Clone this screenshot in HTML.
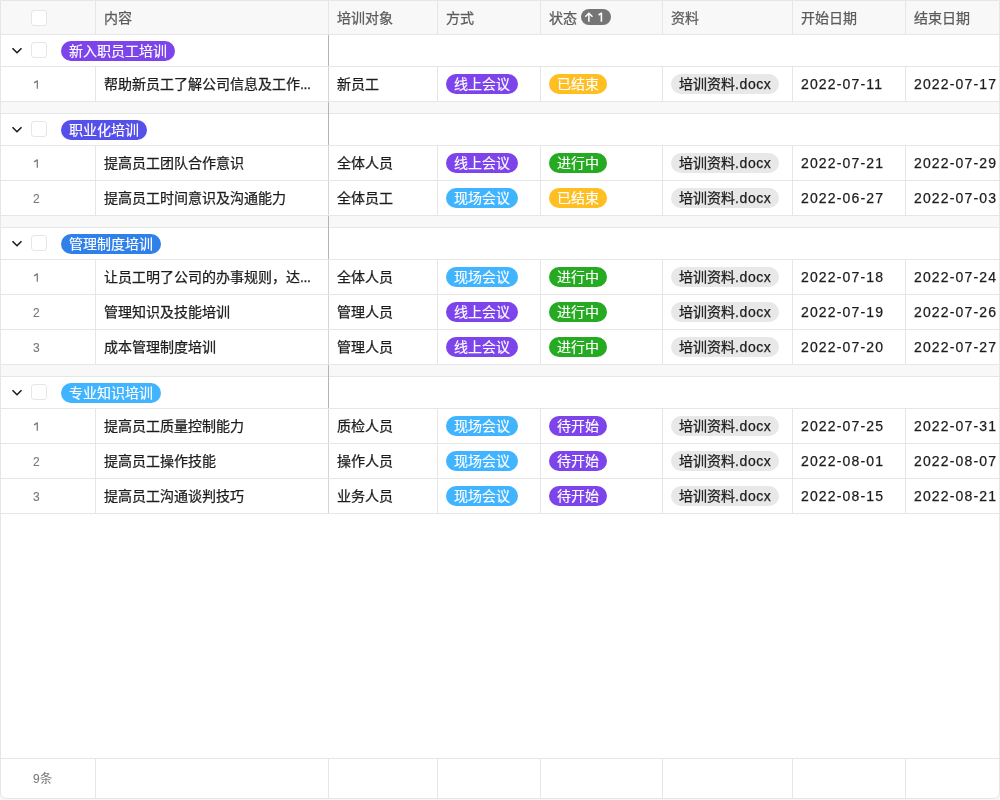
<!DOCTYPE html><html lang="zh-CN"><head><meta charset="utf-8"><style>
*{box-sizing:border-box;margin:0;padding:0}
html,body{width:1000px;height:800px;overflow:hidden;background:#f7f7f7}
body{font-family:"Liberation Sans",sans-serif;font-size:14px;color:#1d1d1d;position:relative}
.root{will-change:transform}
.a{position:absolute}
.hl{position:absolute;height:1px;background:#e6e6e6}
.vl{position:absolute;width:1px;background:#e6e6e6}
.t{position:absolute;white-space:nowrap;line-height:20px;-webkit-text-stroke:0.25px currentColor}
.cb{position:absolute;width:16px;height:16px;border:1px solid #e6e6e6;border-radius:3px;background:#fff}
.tag{position:absolute;height:20px;line-height:20px;border-radius:10px;color:#fff;padding:0 8px;white-space:nowrap;-webkit-text-stroke:0.15px #fff}
.file{position:absolute;height:20px;line-height:20px;border-radius:10px;background:#e8e8e8;color:#1d1d1d;padding:0 8px;white-space:nowrap;-webkit-text-stroke:0.25px #1d1d1d}
</style></head><body>
<div class="a root" style="left:0;top:0;width:1000px;height:799px;border:1px solid #e6e6e6;border-radius:0 0 6px 6px;overflow:hidden;background:#fff">

<div class="a" style="left:0;top:0;width:1000px;height:34px;background:#f8f8f8"></div>
<div class="cb" style="left:30px;top:9px"></div>
<div class="t" style="left:103px;top:7px;color:#5c5c5c">内容</div>
<div class="vl" style="left:94px;top:0;height:34px"></div>
<div class="t" style="left:336px;top:7px;color:#5c5c5c">培训对象</div>
<div class="vl" style="left:327px;top:0;height:34px"></div>
<div class="t" style="left:445px;top:7px;color:#5c5c5c">方式</div>
<div class="vl" style="left:436px;top:0;height:34px"></div>
<div class="t" style="left:548px;top:7px;color:#5c5c5c">状态</div>
<div class="vl" style="left:539px;top:0;height:34px"></div>
<div class="t" style="left:670px;top:7px;color:#5c5c5c">资料</div>
<div class="vl" style="left:661px;top:0;height:34px"></div>
<div class="t" style="left:800px;top:7px;color:#5c5c5c">开始日期</div>
<div class="vl" style="left:791px;top:0;height:34px"></div>
<div class="t" style="left:913px;top:7px;color:#5c5c5c">结束日期</div>
<div class="vl" style="left:904px;top:0;height:34px"></div>
<div class="a" style="left:580px;top:8px;width:30px;height:16px;border-radius:8px;background:#757575"><svg class="a" style="left:0;top:0" width="30" height="16" viewBox="0 0 30 16"><path d="M7.9 12.8 V5 M4.3 7.8 L7.9 4.3 L11.5 7.8" fill="none" stroke="#fff" stroke-width="1.5"/><path d="M17.6 6 L20.4 4.2 V12.8" fill="none" stroke="#fff" stroke-width="1.6" stroke-linejoin="round"/></svg></div>
<div class="hl" style="left:0;top:33px;width:1000px"></div>
<svg class="a" style="left:9px;top:43px" width="14" height="12" viewBox="0 0 14 12"><path d="M2.5 4.2 L7 8.7 L11.5 4.2" fill="none" stroke="#1d1d1d" stroke-width="1.6"/></svg>
<div class="cb" style="left:30px;top:41px"></div>
<div class="tag" style="left:60px;top:40px;background:#7c44ea">新入职员工培训</div>
<div class="vl" style="left:327px;top:34px;height:32px;background:#b4b4b4"></div>
<div class="hl" style="left:0;top:65px;width:1000px"></div>
<svg class="a" style="left:32px;top:79px" width="8" height="11" viewBox="0 0 8 11"><path d="M1.1 2.9 L4.3 0.9 V8.7" fill="none" stroke="#7a7a7a" stroke-width="1.25" stroke-linejoin="round"/></svg>
<div class="t" style="left:103px;top:73px">帮助新员工了解公司信息及工作<span style="letter-spacing:-0.35px">...</span></div>
<div class="t" style="left:336px;top:73px">新员工</div>
<div class="tag" style="left:445px;top:73px;background:#7c44ea">线上会议</div>
<div class="tag" style="left:548px;top:73px;background:#ffbe22">已结束</div>
<div class="file" style="left:670px;top:73px">培训资料<span style="letter-spacing:0.6px">.docx</span></div>
<div class="t" style="left:800px;top:73px;letter-spacing:1.15px">2022-07-11</div>
<div class="t" style="left:913px;top:73px;letter-spacing:1.15px">2022-07-17</div>
<div class="vl" style="left:94px;top:66px;height:35px"></div>
<div class="vl" style="left:327px;top:66px;height:35px;background:#d4d4d4"></div>
<div class="vl" style="left:436px;top:66px;height:35px"></div>
<div class="vl" style="left:539px;top:66px;height:35px"></div>
<div class="vl" style="left:661px;top:66px;height:35px"></div>
<div class="vl" style="left:791px;top:66px;height:35px"></div>
<div class="vl" style="left:904px;top:66px;height:35px"></div>
<div class="hl" style="left:0;top:100px;width:1000px"></div>
<div class="a" style="left:0;top:101px;width:1000px;height:12px;background:#f8f8f8"></div>
<div class="hl" style="left:0;top:112px;width:1000px"></div>
<div class="vl" style="left:327px;top:101px;height:12px;background:#b4b4b4"></div>
<svg class="a" style="left:9px;top:122px" width="14" height="12" viewBox="0 0 14 12"><path d="M2.5 4.2 L7 8.7 L11.5 4.2" fill="none" stroke="#1d1d1d" stroke-width="1.6"/></svg>
<div class="cb" style="left:30px;top:120px"></div>
<div class="tag" style="left:60px;top:119px;background:#5550ea">职业化培训</div>
<div class="vl" style="left:327px;top:113px;height:32px;background:#b4b4b4"></div>
<div class="hl" style="left:0;top:144px;width:1000px"></div>
<svg class="a" style="left:32px;top:158px" width="8" height="11" viewBox="0 0 8 11"><path d="M1.1 2.9 L4.3 0.9 V8.7" fill="none" stroke="#7a7a7a" stroke-width="1.25" stroke-linejoin="round"/></svg>
<div class="t" style="left:103px;top:152px">提高员工团队合作意识</div>
<div class="t" style="left:336px;top:152px">全体人员</div>
<div class="tag" style="left:445px;top:152px;background:#7c44ea">线上会议</div>
<div class="tag" style="left:548px;top:152px;background:#25aa22">进行中</div>
<div class="file" style="left:670px;top:152px">培训资料<span style="letter-spacing:0.6px">.docx</span></div>
<div class="t" style="left:800px;top:152px;letter-spacing:1.15px">2022-07-21</div>
<div class="t" style="left:913px;top:152px;letter-spacing:1.15px">2022-07-29</div>
<div class="vl" style="left:94px;top:145px;height:35px"></div>
<div class="vl" style="left:327px;top:145px;height:35px;background:#d4d4d4"></div>
<div class="vl" style="left:436px;top:145px;height:35px"></div>
<div class="vl" style="left:539px;top:145px;height:35px"></div>
<div class="vl" style="left:661px;top:145px;height:35px"></div>
<div class="vl" style="left:791px;top:145px;height:35px"></div>
<div class="vl" style="left:904px;top:145px;height:35px"></div>
<div class="hl" style="left:0;top:179px;width:1000px"></div>
<div class="t" style="left:32px;top:188px;font-size:12px;color:#7a7a7a;-webkit-text-stroke:0.1px #7a7a7a">2</div>
<div class="t" style="left:103px;top:187px">提高员工时间意识及沟通能力</div>
<div class="t" style="left:336px;top:187px">全体员工</div>
<div class="tag" style="left:445px;top:187px;background:#40b4ff">现场会议</div>
<div class="tag" style="left:548px;top:187px;background:#ffbe22">已结束</div>
<div class="file" style="left:670px;top:187px">培训资料<span style="letter-spacing:0.6px">.docx</span></div>
<div class="t" style="left:800px;top:187px;letter-spacing:1.15px">2022-06-27</div>
<div class="t" style="left:913px;top:187px;letter-spacing:1.15px">2022-07-03</div>
<div class="vl" style="left:94px;top:180px;height:35px"></div>
<div class="vl" style="left:327px;top:180px;height:35px;background:#d4d4d4"></div>
<div class="vl" style="left:436px;top:180px;height:35px"></div>
<div class="vl" style="left:539px;top:180px;height:35px"></div>
<div class="vl" style="left:661px;top:180px;height:35px"></div>
<div class="vl" style="left:791px;top:180px;height:35px"></div>
<div class="vl" style="left:904px;top:180px;height:35px"></div>
<div class="hl" style="left:0;top:214px;width:1000px"></div>
<div class="a" style="left:0;top:215px;width:1000px;height:12px;background:#f8f8f8"></div>
<div class="hl" style="left:0;top:226px;width:1000px"></div>
<div class="vl" style="left:327px;top:215px;height:12px;background:#b4b4b4"></div>
<svg class="a" style="left:9px;top:236px" width="14" height="12" viewBox="0 0 14 12"><path d="M2.5 4.2 L7 8.7 L11.5 4.2" fill="none" stroke="#1d1d1d" stroke-width="1.6"/></svg>
<div class="cb" style="left:30px;top:234px"></div>
<div class="tag" style="left:60px;top:233px;background:#3080ea">管理制度培训</div>
<div class="vl" style="left:327px;top:227px;height:32px;background:#b4b4b4"></div>
<div class="hl" style="left:0;top:258px;width:1000px"></div>
<svg class="a" style="left:32px;top:272px" width="8" height="11" viewBox="0 0 8 11"><path d="M1.1 2.9 L4.3 0.9 V8.7" fill="none" stroke="#7a7a7a" stroke-width="1.25" stroke-linejoin="round"/></svg>
<div class="t" style="left:103px;top:266px">让员工明了公司的办事规则，达<span style="letter-spacing:-0.35px">...</span></div>
<div class="t" style="left:336px;top:266px">全体人员</div>
<div class="tag" style="left:445px;top:266px;background:#40b4ff">现场会议</div>
<div class="tag" style="left:548px;top:266px;background:#25aa22">进行中</div>
<div class="file" style="left:670px;top:266px">培训资料<span style="letter-spacing:0.6px">.docx</span></div>
<div class="t" style="left:800px;top:266px;letter-spacing:1.15px">2022-07-18</div>
<div class="t" style="left:913px;top:266px;letter-spacing:1.15px">2022-07-24</div>
<div class="vl" style="left:94px;top:259px;height:35px"></div>
<div class="vl" style="left:327px;top:259px;height:35px;background:#d4d4d4"></div>
<div class="vl" style="left:436px;top:259px;height:35px"></div>
<div class="vl" style="left:539px;top:259px;height:35px"></div>
<div class="vl" style="left:661px;top:259px;height:35px"></div>
<div class="vl" style="left:791px;top:259px;height:35px"></div>
<div class="vl" style="left:904px;top:259px;height:35px"></div>
<div class="hl" style="left:0;top:293px;width:1000px"></div>
<div class="t" style="left:32px;top:302px;font-size:12px;color:#7a7a7a;-webkit-text-stroke:0.1px #7a7a7a">2</div>
<div class="t" style="left:103px;top:301px">管理知识及技能培训</div>
<div class="t" style="left:336px;top:301px">管理人员</div>
<div class="tag" style="left:445px;top:301px;background:#7c44ea">线上会议</div>
<div class="tag" style="left:548px;top:301px;background:#25aa22">进行中</div>
<div class="file" style="left:670px;top:301px">培训资料<span style="letter-spacing:0.6px">.docx</span></div>
<div class="t" style="left:800px;top:301px;letter-spacing:1.15px">2022-07-19</div>
<div class="t" style="left:913px;top:301px;letter-spacing:1.15px">2022-07-26</div>
<div class="vl" style="left:94px;top:294px;height:35px"></div>
<div class="vl" style="left:327px;top:294px;height:35px;background:#d4d4d4"></div>
<div class="vl" style="left:436px;top:294px;height:35px"></div>
<div class="vl" style="left:539px;top:294px;height:35px"></div>
<div class="vl" style="left:661px;top:294px;height:35px"></div>
<div class="vl" style="left:791px;top:294px;height:35px"></div>
<div class="vl" style="left:904px;top:294px;height:35px"></div>
<div class="hl" style="left:0;top:328px;width:1000px"></div>
<div class="t" style="left:32px;top:337px;font-size:12px;color:#7a7a7a;-webkit-text-stroke:0.1px #7a7a7a">3</div>
<div class="t" style="left:103px;top:336px">成本管理制度培训</div>
<div class="t" style="left:336px;top:336px">管理人员</div>
<div class="tag" style="left:445px;top:336px;background:#7c44ea">线上会议</div>
<div class="tag" style="left:548px;top:336px;background:#25aa22">进行中</div>
<div class="file" style="left:670px;top:336px">培训资料<span style="letter-spacing:0.6px">.docx</span></div>
<div class="t" style="left:800px;top:336px;letter-spacing:1.15px">2022-07-20</div>
<div class="t" style="left:913px;top:336px;letter-spacing:1.15px">2022-07-27</div>
<div class="vl" style="left:94px;top:329px;height:35px"></div>
<div class="vl" style="left:327px;top:329px;height:35px;background:#d4d4d4"></div>
<div class="vl" style="left:436px;top:329px;height:35px"></div>
<div class="vl" style="left:539px;top:329px;height:35px"></div>
<div class="vl" style="left:661px;top:329px;height:35px"></div>
<div class="vl" style="left:791px;top:329px;height:35px"></div>
<div class="vl" style="left:904px;top:329px;height:35px"></div>
<div class="hl" style="left:0;top:363px;width:1000px"></div>
<div class="a" style="left:0;top:364px;width:1000px;height:12px;background:#f8f8f8"></div>
<div class="hl" style="left:0;top:375px;width:1000px"></div>
<div class="vl" style="left:327px;top:364px;height:12px;background:#b4b4b4"></div>
<svg class="a" style="left:9px;top:385px" width="14" height="12" viewBox="0 0 14 12"><path d="M2.5 4.2 L7 8.7 L11.5 4.2" fill="none" stroke="#1d1d1d" stroke-width="1.6"/></svg>
<div class="cb" style="left:30px;top:383px"></div>
<div class="tag" style="left:60px;top:382px;background:#40b4ff">专业知识培训</div>
<div class="vl" style="left:327px;top:376px;height:32px;background:#b4b4b4"></div>
<div class="hl" style="left:0;top:407px;width:1000px"></div>
<svg class="a" style="left:32px;top:421px" width="8" height="11" viewBox="0 0 8 11"><path d="M1.1 2.9 L4.3 0.9 V8.7" fill="none" stroke="#7a7a7a" stroke-width="1.25" stroke-linejoin="round"/></svg>
<div class="t" style="left:103px;top:415px">提高员工质量控制能力</div>
<div class="t" style="left:336px;top:415px">质检人员</div>
<div class="tag" style="left:445px;top:415px;background:#40b4ff">现场会议</div>
<div class="tag" style="left:548px;top:415px;background:#7c44ea">待开始</div>
<div class="file" style="left:670px;top:415px">培训资料<span style="letter-spacing:0.6px">.docx</span></div>
<div class="t" style="left:800px;top:415px;letter-spacing:1.15px">2022-07-25</div>
<div class="t" style="left:913px;top:415px;letter-spacing:1.15px">2022-07-31</div>
<div class="vl" style="left:94px;top:408px;height:35px"></div>
<div class="vl" style="left:327px;top:408px;height:35px;background:#d4d4d4"></div>
<div class="vl" style="left:436px;top:408px;height:35px"></div>
<div class="vl" style="left:539px;top:408px;height:35px"></div>
<div class="vl" style="left:661px;top:408px;height:35px"></div>
<div class="vl" style="left:791px;top:408px;height:35px"></div>
<div class="vl" style="left:904px;top:408px;height:35px"></div>
<div class="hl" style="left:0;top:442px;width:1000px"></div>
<div class="t" style="left:32px;top:451px;font-size:12px;color:#7a7a7a;-webkit-text-stroke:0.1px #7a7a7a">2</div>
<div class="t" style="left:103px;top:450px">提高员工操作技能</div>
<div class="t" style="left:336px;top:450px">操作人员</div>
<div class="tag" style="left:445px;top:450px;background:#40b4ff">现场会议</div>
<div class="tag" style="left:548px;top:450px;background:#7c44ea">待开始</div>
<div class="file" style="left:670px;top:450px">培训资料<span style="letter-spacing:0.6px">.docx</span></div>
<div class="t" style="left:800px;top:450px;letter-spacing:1.15px">2022-08-01</div>
<div class="t" style="left:913px;top:450px;letter-spacing:1.15px">2022-08-07</div>
<div class="vl" style="left:94px;top:443px;height:35px"></div>
<div class="vl" style="left:327px;top:443px;height:35px;background:#d4d4d4"></div>
<div class="vl" style="left:436px;top:443px;height:35px"></div>
<div class="vl" style="left:539px;top:443px;height:35px"></div>
<div class="vl" style="left:661px;top:443px;height:35px"></div>
<div class="vl" style="left:791px;top:443px;height:35px"></div>
<div class="vl" style="left:904px;top:443px;height:35px"></div>
<div class="hl" style="left:0;top:477px;width:1000px"></div>
<div class="t" style="left:32px;top:486px;font-size:12px;color:#7a7a7a;-webkit-text-stroke:0.1px #7a7a7a">3</div>
<div class="t" style="left:103px;top:485px">提高员工沟通谈判技巧</div>
<div class="t" style="left:336px;top:485px">业务人员</div>
<div class="tag" style="left:445px;top:485px;background:#40b4ff">现场会议</div>
<div class="tag" style="left:548px;top:485px;background:#7c44ea">待开始</div>
<div class="file" style="left:670px;top:485px">培训资料<span style="letter-spacing:0.6px">.docx</span></div>
<div class="t" style="left:800px;top:485px;letter-spacing:1.15px">2022-08-15</div>
<div class="t" style="left:913px;top:485px;letter-spacing:1.15px">2022-08-21</div>
<div class="vl" style="left:94px;top:478px;height:35px"></div>
<div class="vl" style="left:327px;top:478px;height:35px;background:#d4d4d4"></div>
<div class="vl" style="left:436px;top:478px;height:35px"></div>
<div class="vl" style="left:539px;top:478px;height:35px"></div>
<div class="vl" style="left:661px;top:478px;height:35px"></div>
<div class="vl" style="left:791px;top:478px;height:35px"></div>
<div class="vl" style="left:904px;top:478px;height:35px"></div>
<div class="hl" style="left:0;top:512px;width:1000px"></div>
<div class="hl" style="left:0;top:757px;width:1000px"></div>
<div class="vl" style="left:94px;top:758px;height:42px"></div>
<div class="vl" style="left:327px;top:758px;height:42px"></div>
<div class="vl" style="left:436px;top:758px;height:42px"></div>
<div class="vl" style="left:539px;top:758px;height:42px"></div>
<div class="vl" style="left:661px;top:758px;height:42px"></div>
<div class="vl" style="left:791px;top:758px;height:42px"></div>
<div class="vl" style="left:904px;top:758px;height:42px"></div>
<div class="t" style="left:32px;top:768px;font-size:12px;color:#7a7a7a;-webkit-text-stroke:0.1px #7a7a7a">9条</div>
</div></body></html>
